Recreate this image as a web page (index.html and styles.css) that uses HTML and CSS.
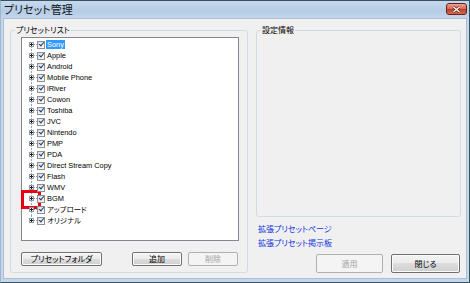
FILE: index.html
```html
<!DOCTYPE html>
<html lang="ja">
    <head>
        <meta charset="UTF-8">
        <title>プリセット管理</title>
        <link rel="stylesheet" href="styles.css">
    </head>
    <body>
        <div class="window">
            <div class="titlebar">
                <span class="title">プリセット管理</span>
                <button class="close" type="button">
                    <svg width="9" height="7" viewBox="0 0 9 7">
                        <path d="M1.5 1 L7.5 6 M7.5 1 L1.5 6" stroke="#5a1810" stroke-width="2.6" fill="none"/>
                        <path d="M1.5 1 L7.5 6 M7.5 1 L1.5 6" stroke="#fff" stroke-width="1.4" fill="none"/>
                    </svg>
                </button>
            </div>
            <div class="client">
                <fieldset class="group group-list">
                    <legend>プリセットリスト</legend>
                    <div class="group-body">
                        <div class="tree-box">
                            <ul class="tree">
                                <li class="node"><span class="exp"></span><span class="chk"></span><span class="lbl sel">Sony</span></li>
                                <li class="node"><span class="exp"></span><span class="chk"></span><span class="lbl">Apple</span></li>
                                <li class="node"><span class="exp"></span><span class="chk"></span><span class="lbl">Android</span></li>
                                <li class="node"><span class="exp"></span><span class="chk"></span><span class="lbl">Mobile Phone</span></li>
                                <li class="node"><span class="exp"></span><span class="chk"></span><span class="lbl">iRiver</span></li>
                                <li class="node"><span class="exp"></span><span class="chk"></span><span class="lbl">Cowon</span></li>
                                <li class="node"><span class="exp"></span><span class="chk"></span><span class="lbl">Toshiba</span></li>
                                <li class="node"><span class="exp"></span><span class="chk"></span><span class="lbl">JVC</span></li>
                                <li class="node"><span class="exp"></span><span class="chk"></span><span class="lbl">Nintendo</span></li>
                                <li class="node"><span class="exp"></span><span class="chk"></span><span class="lbl">PMP</span></li>
                                <li class="node"><span class="exp"></span><span class="chk"></span><span class="lbl">PDA</span></li>
                                <li class="node"><span class="exp"></span><span class="chk"></span><span class="lbl">Direct Stream Copy</span></li>
                                <li class="node"><span class="exp"></span><span class="chk"></span><span class="lbl">Flash</span></li>
                                <li class="node"><span class="exp"></span><span class="chk"></span><span class="lbl">WMV</span></li>
                                <li class="node"><span class="exp"></span><span class="chk"></span><span class="lbl">BGM</span></li>
                                <li class="node"><span class="exp"></span><span class="chk"></span><span class="lbl">アップロード</span></li>
                                <li class="node"><span class="exp"></span><span class="chk"></span><span class="lbl">オリジナル</span></li>
                            </ul>
                            <div class="mark"></div>
                        </div>
                        <div class="btn-row">
                            <button class="btn folder" type="button">プリセットフォルダ</button>
                            <button class="btn small push" type="button">追加</button>
                            <button class="btn small" type="button" disabled>削除</button>
                        </div>
                    </div>
                </fieldset>
                <div class="side">
                    <fieldset class="group group-info">
                        <legend>設定情報</legend>
                    </fieldset>
                    <a class="link first" href="#">拡張プリセットページ</a>
                    <a class="link" href="#">拡張プリセット掲示板</a>
                    <div class="actions">
                        <button class="btn big apply" type="button" disabled>適用</button>
                        <button class="btn big shut" type="button">閉じる</button>
                    </div>
                </div>
            </div>
        </div>
    </body>
</html>
```

FILE: styles.css
```css
body {
    margin: 0;
    font-family: "Liberation Sans", "Noto Sans CJK JP", sans-serif;
    font-feature-settings: "palt";
    background-color: #ffffff;
}
.window {
    width: 470px;
    height: 283px;
    box-sizing: border-box;
    border: 1px solid #37535f;
    border-left-color: #9fb6cc;
    background-color: #c4d7eb;
    padding: 0 3px 4px 3px;
    display: flex;
    flex-direction: column;
}
.titlebar {
    height: 18px;
    margin: 0 -3px;
    padding: 0 2px 0 3px;
    display: flex;
    align-items: flex-start;
    background: linear-gradient(#c6d8ed, #b6cce6 55%, #c4d7eb);
}
.title {
    font-family: "Noto Sans CJK JP", sans-serif;
    font-size: 11px;
    line-height: 17px;
    color: #101820;
}
.close {
    margin: 2px 0 0 auto;
    width: 21px;
    height: 12px;
    padding: 0;
    box-sizing: border-box;
    border: 1px solid #6b1f17;
    border-radius: 3px;
    background: linear-gradient(#e9a596 0%, #d66b58 45%, #c13f2c 55%, #d4694f 100%);
    display: flex;
    align-items: center;
    justify-content: center;
}
.client {
    flex: 1;
    min-height: 0;
    background-color: #f0f0f0;
    box-shadow: 0 0 0 1px #aabfd5;
    padding: 5px 5px 5px 6px;
    display: flex;
    gap: 8px;
}
.group {
    margin: 0;
    padding: 0;
    min-width: 0;
    border: 1px solid #d2dbe1;
    border-radius: 3px;
}
.group legend {
    margin-left: 4px;
    padding: 0 1px;
    font-family: "Noto Sans CJK JP", sans-serif;
    font-size: 8px;
    line-height: 12px;
    color: #000;
}
.group-list {
    width: 238px;
    box-sizing: border-box;
}
.group-body {
    padding: 1px 8px 0 10px;
    display: flex;
    flex-direction: column;
}
.tree-box {
    position: relative;
    height: 204px;
    box-sizing: border-box;
    border: 1px solid #828790;
    background-color: #fff;
}
.tree {
    list-style: none;
    margin: 0;
    padding: 1px 0 0 0;
}
.node {
    position: relative;
    height: 11px;
    padding-left: 7px;
    display: flex;
    align-items: center;
}
.node:before {
    content: "";
    position: absolute;
    left: 9px;
    top: 0;
    bottom: 0;
    border-left: 1px dotted #a0a0a0;
}
.node:first-child:before {
    top: 5px;
}
.node:last-child:before {
    bottom: 5px;
}
.node:after {
    content: "";
    position: absolute;
    left: 9px;
    width: 6px;
    top: 5px;
    border-top: 1px dotted #a0a0a0;
}
.exp {
    position: relative;
    z-index: 1;
    width: 5px;
    height: 5px;
    box-sizing: border-box;
    border: 1px solid #8e9aa6;
    background-color: #fff;
}
.exp:before {
    content: "";
    position: absolute;
    left: 0;
    top: 1px;
    width: 3px;
    height: 1px;
    background-color: #1c1c1c;
}
.exp:after {
    content: "";
    position: absolute;
    left: 1px;
    top: 0;
    width: 1px;
    height: 3px;
    background-color: #1c1c1c;
}
.chk {
    position: relative;
    z-index: 1;
    margin-left: 3px;
    width: 8px;
    height: 8px;
    box-sizing: border-box;
    border: 1px solid #8f8f8f;
    background: linear-gradient(135deg, #d9dde2, #fdfdfd);
}
.chk:after {
    content: "";
    position: absolute;
    left: 1.5px;
    top: -0.5px;
    width: 2px;
    height: 4px;
    border: solid #1f3f72;
    border-width: 0 1.5px 1.5px 0;
    transform: rotate(40deg);
}
.lbl {
    margin-left: 1px;
    padding: 0 1px;
    font-size: 7.4px;
    line-height: 9px;
    color: #000;
    white-space: nowrap;
}
.lbl.sel {
    background-color: #3399ff;
    color: #fff;
}
.mark {
    position: absolute;
    left: -1px;
    top: 152px;
    width: 20px;
    height: 19px;
    box-sizing: border-box;
    border: 3px solid #e60012;
}
.btn-row {
    margin-top: 11px;
    padding-right: 1px;
    display: flex;
    gap: 6px;
}
.btn {
    height: 14px;
    padding: 0;
    box-sizing: border-box;
    border: 1px solid #707070;
    border-radius: 2px;
    background: linear-gradient(#f3f3f3 0%, #ebebeb 50%, #dddddd 50%, #cfcfcf 100%);
    box-shadow: inset 0 0 0 1px #fbfbfb;
    font-family: "Noto Sans CJK JP", sans-serif;
    font-feature-settings: "palt";
    font-size: 8px;
    line-height: 12px;
    color: #000;
}
.btn:disabled {
    border-color: #adb2b5;
    background: #f4f4f4;
    box-shadow: none;
    color: #a3a3a3;
}
.folder {
    width: 81px;
}
.small {
    width: 50px;
}
.push {
    margin-left: auto;
}
.side {
    width: 205px;
    display: flex;
    flex-direction: column;
}
.group-info {
    height: 193px;
    box-sizing: border-box;
}
.link {
    display: block;
    margin-left: 2px;
    font-family: "Noto Sans CJK JP", sans-serif;
    font-size: 8px;
    line-height: 14px;
    color: #1030e0;
    text-decoration: none;
}
.link.first {
    margin-top: 5px;
}
.actions {
    margin-top: 4px;
    padding-right: 1px;
    display: flex;
    justify-content: flex-end;
    gap: 8px;
}
.big {
    height: 19px;
    line-height: 17px;
}
.apply {
    width: 67px;
}
.shut {
    width: 69px;
}
```
